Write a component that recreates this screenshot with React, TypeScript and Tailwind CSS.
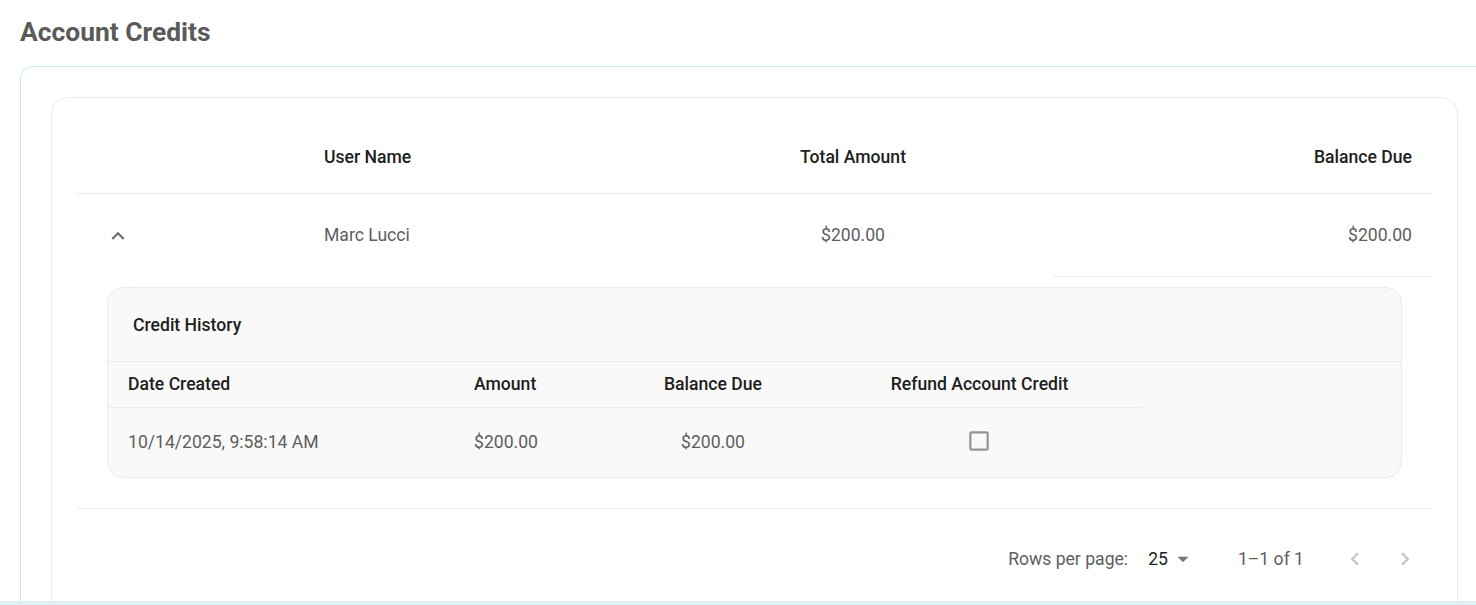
import React from "react";

const font = { fontFamily: "Roboto, 'Noto Sans', Arial, sans-serif" };

function ChevronUp() {
  return (
    <svg width="26" height="26" viewBox="0 0 24 24" className="fill-[#6b6b6b]">
      <path d="M7.41 15.41 12 10.83l4.59 4.58L18 14l-6-6-6 6z" />
    </svg>
  );
}

function ArrowDrop() {
  return (
    <svg width="26" height="26" viewBox="0 0 24 24" className="fill-[#757575]">
      <path d="M7 10l5 5 5-5z" />
    </svg>
  );
}

function PageLeft() {
  return (
    <svg width="26" height="26" viewBox="0 0 24 24" className="fill-[#c4c4c4]">
      <path d="M15.41 16.59 10.83 12l4.58-4.59L14 6l-6 6 6 6z" />
    </svg>
  );
}

function PageRight() {
  return (
    <svg width="26" height="26" viewBox="0 0 24 24" className="fill-[#c4c4c4]">
      <path d="M8.59 16.59 13.17 12 8.59 7.41 10 6l6 6-6 6z" />
    </svg>
  );
}

function CheckboxBlank() {
  return (
    <svg width="26" height="26" viewBox="0 0 24 24" className="fill-[#949494]">
      <path d="M19 5v14H5V5h14m0-2H5c-1.11 0-2 .9-2 2v14c0 1.1.89 2 2 2h14c1.1 0 2-.9 2-2V5c0-1.1-.9-2-2-2z" />
    </svg>
  );
}

const mainCols = "grid grid-cols-[227px_349px_400px_379px]";
const subCols = "grid grid-cols-[346px_155px_208px_325px] w-[1034px]";

export default function App() {
  return (
    <div className="h-[605px] w-full overflow-hidden bg-white flex flex-col" style={font}>
      <div className="flex-1 overflow-hidden">
        <h1 className="pl-[20px] pt-[16px] h-[66px] text-[26.4px] leading-[32px] font-bold text-[#5a5a5a]">
          Account Credits
        </h1>

        <div className="ml-[20px] w-[1469px] border border-[#c2ecf2] rounded-[12px] p-[30px]">
          <div className="border border-[#e3eef1] rounded-[16px] px-[25px] pt-[23px] bg-white">
            {/* header */}
            <div className={`${mainCols} h-[73px] border-b border-[#e6eeef] items-center text-[17.6px] font-medium text-[#1e1e1e]`}>
              <div />
              <div className="pl-[20px]">User Name</div>
              <div className="text-center">Total Amount</div>
              <div className="text-right pr-[20px]">Balance Due</div>
            </div>

            {/* user row */}
            <div className={`${mainCols} h-[83px] text-[17.6px] text-[#5e5e5e]`}>
              <div className="flex items-center pl-[28px]">
                <ChevronUp />
              </div>
              <div className="flex items-center pl-[20px]">Marc Lucci</div>
              <div className="flex items-center justify-center">$200.00</div>
              <div className="flex items-center justify-end pr-[20px] border-b border-[#e6eeef]">$200.00</div>
            </div>

            {/* expanded credit history */}
            <div className="px-[30px] pt-[10px] pb-[30px] border-b border-[#e6eeef]">
              <div className="border border-[#e3eef1] rounded-[16px] bg-[#f9f9f9]">
                <div className="h-[74px] pl-[25px] pt-[2px] flex items-center border-b border-[#e6eeef] text-[17.6px] font-medium text-[#1e1e1e]">
                  Credit History
                </div>
                <div className={`${subCols} h-[46px] border-b border-[#e6eeef] items-center text-[17.6px] font-medium text-[#1e1e1e]`}>
                  <div className="pl-[20px]">Date Created</div>
                  <div className="pl-[20px]">Amount</div>
                  <div className="text-center">Balance Due</div>
                  <div className="text-center">Refund Account Credit</div>
                </div>
                <div className={`${subCols} h-[69px] items-center text-[17.6px] text-[#5e5e5e]`}>
                  <div className="pl-[20px]">10/14/2025, 9:58:14 AM</div>
                  <div className="pl-[20px]">$200.00</div>
                  <div className="text-center">$200.00</div>
                  <div className="flex justify-center pr-[2px] mb-[3px]">
                    <CheckboxBlank />
                  </div>
                </div>
              </div>
            </div>

            {/* pagination */}
            <div className="h-[100px] mb-[20px] flex items-center justify-end pr-[14px] text-[17.6px]">
              <span className="text-[#5e5e5e]">Rows per page:</span>
              <span className="ml-[20px] text-[#222]">25</span>
              <span className="ml-[2px] flex"><ArrowDrop /></span>
              <span className="ml-[42px] text-[#5e5e5e]">1–1 of 1</span>
              <span className="ml-[38px] flex"><PageLeft /></span>
              <span className="ml-[24px] flex"><PageRight /></span>
            </div>
          </div>
        </div>
      </div>
      <div className="h-[4px] w-full bg-[#dff0f5] shrink-0" />
    </div>
  );
}
